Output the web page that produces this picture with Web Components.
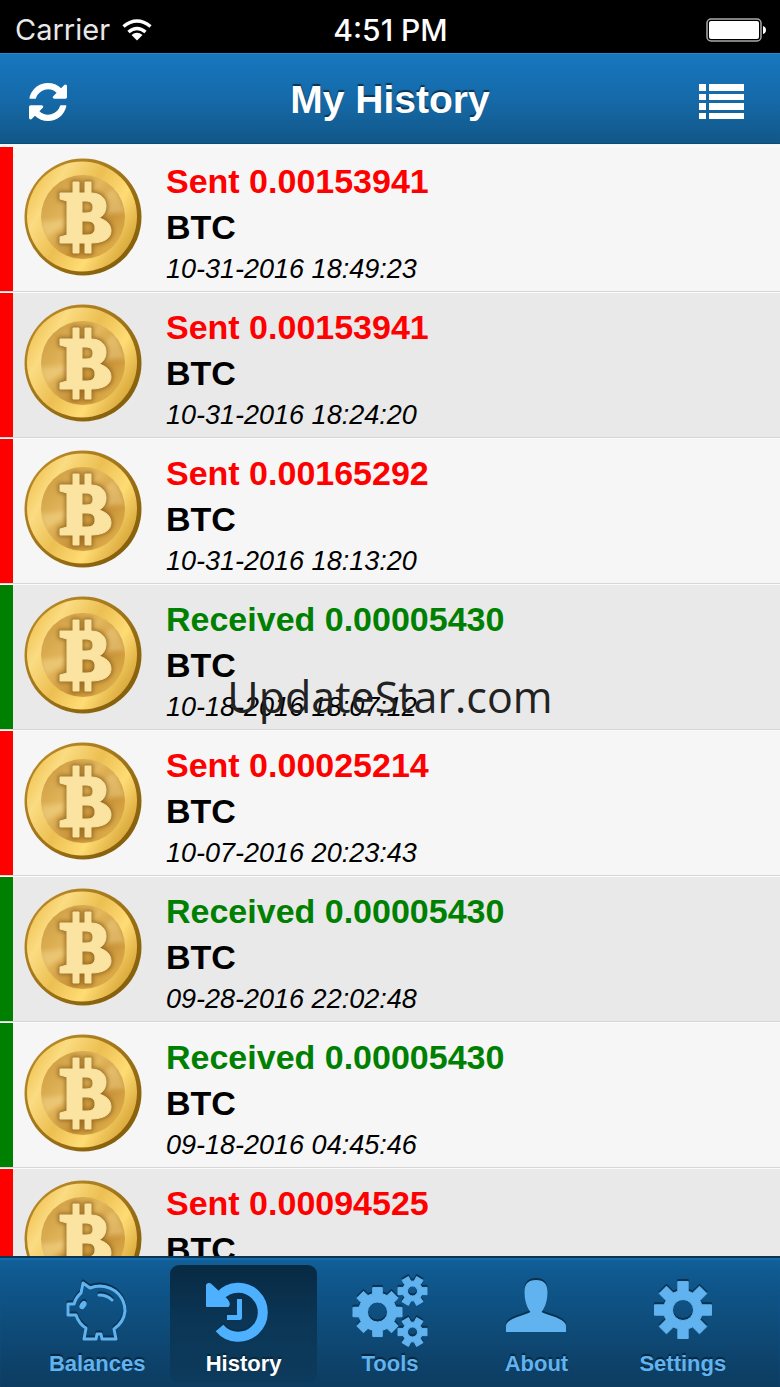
<!DOCTYPE html>
<html lang="en">
<head>
<meta charset="utf-8">
<meta name="viewport" content="width=device-width, initial-scale=1">
<title>My History</title>
<style>
  body { margin: 0; font-family: "Liberation Sans", Arial, sans-serif; background: #f6f6f6; color: #000; }
</style>
</head>
<body>
<wallet-app>
  <status-bar slot="status" carrier="Carrier" time="4:51 PM"></status-bar>
  <nav-bar slot="header">My History</nav-bar>
  <history-row kind="sent" amount="0.00153941" date="10-31-2016 18:49:23"></history-row>
  <history-row kind="sent" amount="0.00153941" date="10-31-2016 18:24:20"></history-row>
  <history-row kind="sent" amount="0.00165292" date="10-31-2016 18:13:20"></history-row>
  <history-row kind="received" amount="0.00005430" date="10-18-2016 18:07:12"></history-row>
  <history-row kind="sent" amount="0.00025214" date="10-07-2016 20:23:43"></history-row>
  <history-row kind="received" amount="0.00005430" date="09-28-2016 22:02:48"></history-row>
  <history-row kind="received" amount="0.00005430" date="09-18-2016 04:45:46"></history-row>
  <history-row kind="sent" amount="0.00094525"></history-row>
  <tab-bar slot="tabs">
    <tab-item icon="piggy">Balances</tab-item>
    <tab-item icon="history" active>History</tab-item>
    <tab-item icon="tools">Tools</tab-item>
    <tab-item icon="about">About</tab-item>
    <tab-item icon="settings">Settings</tab-item>
  </tab-bar>
  <span slot="watermark">UpdateStar.com</span>
</wallet-app>

<script>
const define = (name, render) => customElements.define(name, class extends HTMLElement {
  constructor() { super(); this.attachShadow({ mode: "open" }); }
  connectedCallback() { this.shadowRoot.innerHTML = render(this); }
});

// Gear outline with n tapered teeth and a round hole (even-odd fill).
function gear(cx, cy, outer, inner, hole, n, topHalf, baseHalf) {
  const pts = [];
  for (let i = 0; i < n; i++) {
    const a = i * 2 * Math.PI / n;
    for (const [r, o] of [[inner, -baseHalf], [outer, -topHalf], [outer, topHalf], [inner, baseHalf]]) {
      pts.push((cx + r * Math.cos(a + o)).toFixed(2) + " " + (cy + r * Math.sin(a + o)).toFixed(2));
    }
  }
  return `<path fill="currentColor" stroke="currentColor" stroke-width="1" stroke-linejoin="round" fill-rule="evenodd" d="M${pts.join("L")}Z
    M${cx - hole} ${cy}a${hole} ${hole} 0 1 0 ${2 * hole} 0a${hole} ${hole} 0 1 0 ${-2 * hole} 0Z"/>`;
}

const icons = {
  piggy: `<g fill="none" stroke="currentColor" stroke-width="3" stroke-linejoin="round" stroke-linecap="round">
    <path d="M24 11L31 16Q36 14 41 14C57 15 66 26 66 39Q65 50 55 57L57 67H43L42 62H38L37 67H25L27 56Q20 52 17 43H9V32H15Q17 25 22 21Z"/>
    <path d="M40 23Q48 23 53 28"/></g>
    <ellipse cx="24" cy="33" rx="3" ry="4.500" transform="rotate(32 24 33)" fill="currentColor"/>`,
  history: `<path fill="none" stroke="currentColor" stroke-width="10" d="M14 24A24.500 24.500 0 1 1 13.500 56"/>
    <path fill="currentColor" stroke="currentColor" stroke-width="2" stroke-linejoin="round" d="M1 13Q3 11 5 13L21 28Q24 32 22 34H1Z"/>
    <path fill="none" stroke="currentColor" stroke-width="5" stroke-linejoin="round" d="M33.500 27V45.500H21"/>`,
  tools: gear(25.5, 40, 25, 19, 10, 8, .19, .26) + gear(60.5, 19, 15, 10, 5, 6, .25, .36) + gear(60.5, 60, 15, 10, 5, 6, .25, .36),
  about: `<path fill="currentColor" d="M38 8C46 8 49.500 12 49.500 20C49.500 30 46 37 43.500 40Q45 41 51 43Q68 48 68 54V60H8V54Q8 48 25 43Q31 41 32.500 40C30 37 26.500 30 26.500 20C26.500 12 30 8 38 8Z"/>`,
  settings: gear(38, 38, 29, 19.5, 10.5, 8, .18, .27)
};

define("wallet-app", () => `
  <style>
    :host { display: flex; flex-direction: column; height: 100vh; position: relative; }
    main { flex: 1; min-height: 0; overflow: hidden auto; scrollbar-width: none; padding-top: 2px; }
    .mark { position: absolute; inset: 0; display: flex; align-items: center; justify-content: center; pointer-events: none;
      padding-top: 6px; font: 43px "Open Sans", "Noto Sans", sans-serif; color: #222; }
    ::slotted(history-row:nth-of-type(even)) { background: #e9e9e9; }
  </style>
  <slot name="status"></slot>
  <slot name="header"></slot>
  <main><slot></slot></main>
  <slot name="tabs"></slot>
  <div class="mark"><slot name="watermark"></slot></div>`);

define("status-bar", el => `
  <style>
    :host { display: grid; grid-template-columns: 1fr auto 1fr; align-items: center; height: 53px; flex: none;
      padding: 6px 14px 0 15px; box-sizing: border-box; background: #000; color: #fff; font: 29px Inter, sans-serif; }
    .left { display: flex; align-items: center; gap: 12px; color: #e8e8e8; }
    .time { font-size: 30px; font-weight: 500; }
    .battery { justify-self: end; }
    svg { display: block; }
  </style>
  <span class="left">${el.getAttribute("carrier")}
    <svg width="30" height="22" viewBox="0 0 30 22" fill="none" stroke="#fff" stroke-width="3.500" aria-label="Wi-Fi">
      <path d="M1.500 7.500Q15-3.500 28.500 7.500M6.500 13Q15 6 23.500 13"/><path fill="#fff" stroke="none" d="M9.500 16Q15 11.500 20.500 16L15 21.500Z"/>
    </svg></span>
  <span class="time">${el.getAttribute("time")}</span>
  <svg class="battery" width="60" height="24" viewBox="0 0 60 24" aria-label="Battery full">
    <rect x="1" y="1" width="54" height="22" rx="4" fill="#000" stroke="#aaa" stroke-width="1.500"/>
    <rect x="3" y="3" width="50" height="18" rx="2" fill="#fff"/><path fill="#fff" d="M57 8Q60 9 60 12T57 16Z"/>
  </svg>`);

define("nav-bar", () => `
  <style>
    :host { display: grid; grid-template-columns: 1fr auto 1fr; align-items: center; height: 91px; flex: none; padding: 0 36px 0 29px;
      box-sizing: border-box; background: linear-gradient(#1777bf, #156aa9 50%, #125788); border-top: 1px solid #2b87c8; border-bottom: 1px solid #0e4c79; }
    h1 { margin: 0; padding: 3px 0 0 7px; font-size: 39px; line-height: 44px; color: #fff; text-shadow: 0 -2px 1px #0b3555; }
    button { appearance: none; border: 0; padding: 6px 0 0; background: none; color: #fff; justify-self: start; cursor: pointer; }
    button:last-child { justify-self: end; }
    svg { display: block; }
  </style>
  <button aria-label="Refresh"><svg width="38" height="38" viewBox="0 0 1536 1536" fill="currentColor"><path d="M1511 928q0 5-1 7-64 268-268 434.500t-478 166.500q-146 0-282.500-55t-243.500-157l-129 129q-19 19-45 19t-45-19-19-45v-448q0-26 19-45t45-19h448q26 0 45 19t19 45-19 45l-137 137q71 66 161 102t187 36q134 0 250-65t186-179q11-17 53-117 8-23 30-23h192q13 0 22.500 9.500t9.500 22.500zm25-800v448q0 26-19 45t-45 19h-448q-26 0-45-19t-19-45 19-45l138-138q-148-137-349-137-134 0-250 65t-186 179q-11 17-53 117-8 23-30 23h-199q-13 0-22.500-9.500t-9.500-22.500v-7q65-268 270-434.500t480-166.500q146 0 284 55.500t245 156.500l130-129q19-19 45-19t45 19 19 45z"/></svg></button>
  <h1><slot></slot></h1>
  <button aria-label="List"><svg width="45" height="36" viewBox="0 0 45 36" fill="currentColor"><path d="M0 0H7V7H0ZM10 0H45V7H10ZM0 10H7V16H0ZM10 10H45V16H10ZM0 19H7V26H0ZM10 19H45V26H10ZM0 29H7V35H0ZM10 29H45V35H10Z"/></svg></button>`);

define("btc-coin", () => `
  <style>:host { display: block; flex: none; } svg { display: block; }</style>
  <svg width="118" height="118" viewBox="0 0 118 118" aria-label="Bitcoin">
    <defs>
      <linearGradient id="rim" x1="0" y1="0" x2="1" y2="1"><stop offset="0" stop-color="#c08f2c"/><stop offset="1" stop-color="#7d5806"/></linearGradient>
      <linearGradient id="ring" x1="0" y1=".2" x2="1" y2=".8"><stop offset="0" stop-color="#eebf4d"/><stop offset=".2" stop-color="#fbdc82"/><stop offset=".45" stop-color="#ecbf52"/><stop offset=".7" stop-color="#ffdc74"/><stop offset="1" stop-color="#cf9a2c"/></linearGradient>
      <linearGradient id="face" x1="0" y1="0" x2="1" y2="1"><stop offset="0" stop-color="#c8963c"/><stop offset=".4" stop-color="#e3b75d"/><stop offset=".65" stop-color="#c89238"/><stop offset="1" stop-color="#e9bd55"/></linearGradient>
      <filter id="soft" x="-20%" y="-20%" width="140%" height="140%"><feGaussianBlur stdDeviation="2"/></filter>
      <path id="letter" d="M36 35H49V24H55V35H61V24H67V35C77 35 82 41 82 48C82 54 79 58 75 60C82 62 87 66 87 73C87 80 80 85 67 85V95H61V85H55V95H49V85H36V79L43 77V43L36 41ZM58 43V55H62C68 55 69 52 69 49S67 43 62 43ZM58 63V77H63C69 77 71 74 71 70S69 63 63 63Z"/>
    </defs>
    <circle cx="59" cy="59" r="58.500" fill="url(#rim)"/>
    <circle cx="58" cy="58.500" r="55" fill="url(#ring)"/>
    <circle cx="59" cy="59" r="42" fill="url(#face)"/>
    <path d="M17 64L59 59L22 78Q17 71 17 64ZM59 59L89 30Q98 38 101 54Z" fill="#f3d58a" opacity=".5" filter="url(#soft)"/>
    <use href="#letter" fill="#8c601a" stroke="#8c601a" stroke-width="4" fill-rule="evenodd" opacity=".8" filter="url(#soft)"/>
    <use href="#letter" fill="#fbe4a1" fill-rule="evenodd" stroke="#fbe4a1" stroke-width="1" stroke-linejoin="round"/>
  </svg>`);

define("history-row", el => `
  <style>
    :host { display: flex; border-top: 1px solid #fbfbfb; border-bottom: 1px solid #d6d6d6; min-height: 144px; }
    .stripe { width: 13px; flex: none; background: var(--tone); }
    btc-coin { margin: 11px 24px 0 11px; }
    .text { padding-top: 11px; min-width: 0; }
    strong, b, time { display: block; font-size: 34px; line-height: 46px; white-space: nowrap; }
    strong { color: var(--tone); }
    time { font-size: 27px; line-height: 38px; font-style: italic; }
    :host([kind="sent"]) { --tone: #f00; }
    :host([kind="received"]) { --tone: #008000; }
  </style>
  <div class="stripe"></div>
  <btc-coin></btc-coin>
  <div class="text">
    <strong>${el.getAttribute("kind") === "sent" ? "Sent" : "Received"} ${el.getAttribute("amount")}</strong>
    <b>BTC</b>
    ${el.hasAttribute("date") ? `<time>${el.getAttribute("date")}</time>` : ""}
  </div>`);

define("tab-bar", () => `
  <style>
    :host { display: block; flex: none; background: linear-gradient(#12609a, #0f588e 15%, #0d3c60); border-top: 2px solid #0a3555; }
    nav { display: grid; grid-template-columns: repeat(5, 1fr); padding: 7px 24px 4px; box-shadow: inset 0 2px 1px #176ba8; }
  </style>
  <nav><slot></slot></nav>`);

define("tab-item", el => `
  <style>
    :host { display: block; color: #61b3ef; }
    a { display: flex; flex-direction: column; align-items: center; height: 118px; padding-top: 7px; box-sizing: border-box; border-radius: 9px;
      color: inherit; text-decoration: none; font-size: 22px; line-height: 26px; font-weight: bold; text-shadow: 0 -2px 1px #08263d; }
    svg { display: block; margin-bottom: 7px; overflow: visible; filter: drop-shadow(0 -2px 0 #08304f); }
    :host([active]) { color: #4db1ff; }
    :host([active]) a { background: linear-gradient(#082a43, #0b3656 50%, #0d3b5d); }
    :host([active]) span { color: #fff; }
  </style>
  <a href="#${el.getAttribute("icon")}"><svg width="76" height="72" viewBox="0 0 76 72" aria-hidden="true">${icons[el.getAttribute("icon")]}</svg><span><slot></slot></span></a>`);
</script>
</body>
</html>
